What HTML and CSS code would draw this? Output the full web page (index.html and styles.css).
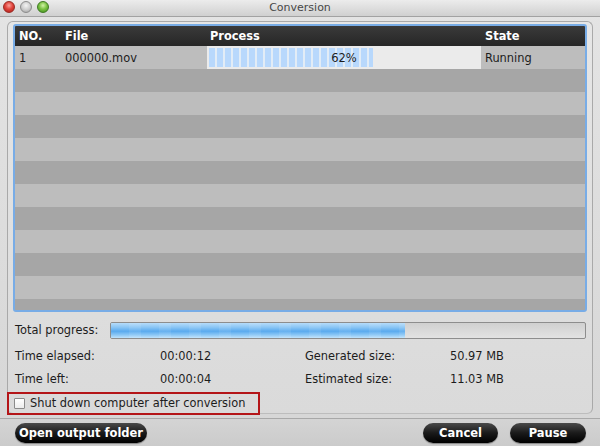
FILE: index.html
```html
<!DOCTYPE html>
<html>
<head>
<meta charset="utf-8">
<link rel="stylesheet" href="styles.css">
</head>
<body>
<div class="window">
  <div class="titlebar">
    <div class="lights">
      <span class="dot dot-red"></span>
      <span class="dot dot-gray"></span>
      <span class="dot dot-green"></span>
    </div>
    <div class="title">Conversion</div>
  </div>
  <div class="content">
    <div class="panel">
      <div class="table">
        <div class="row head">
          <div class="c c-no">NO.</div>
          <div class="c c-file">File</div>
          <div class="c c-proc">Process</div>
          <div class="c c-state">State</div>
        </div>
        <div class="row stripe-a">
          <div class="c c-no">1</div>
          <div class="c c-file">000000.mov</div>
          <div class="c c-proc cellbar"><div class="segs" style="width:60%"></div><span class="pct">62%</span></div>
          <div class="c c-state">Running</div>
        </div>
        <div class="row stripe-b"></div>
        <div class="row stripe-a"></div>
        <div class="row stripe-b"></div>
        <div class="row stripe-a"></div>
        <div class="row stripe-b"></div>
        <div class="row stripe-a"></div>
        <div class="row stripe-b"></div>
        <div class="row stripe-a"></div>
        <div class="row stripe-b"></div>
        <div class="row stripe-a"></div>
        <div class="row stripe-b"></div>
      </div>
      <div class="total">
        <span class="total-label">Total progress:</span>
        <div class="bar"><div class="fill" style="width:62%"></div></div>
      </div>
      <div class="info">
        <span>Time elapsed:</span><span>00:00:12</span><span>Generated size:</span><span>50.97 MB</span>
        <span>Time left:</span><span>00:00:04</span><span>Estimated size:</span><span>11.03 MB</span>
      </div>
      <div class="check-row">
        <span class="checkbox"></span>
        <span>Shut down computer after conversion</span>
      </div>
    </div>
    <div class="highlight"></div>
  </div>
  <div class="bottombar">
    <button class="btn btn-open">Open output folder</button>
    <div class="spacer"></div>
    <button class="btn btn-cancel">Cancel</button>
    <button class="btn btn-pause">Pause</button>
  </div>
</div>
</body>
</html>
```

FILE: styles.css
```css
html, body {
  margin: 0;
  padding: 0;
}
body {
  width: 600px;
  height: 446px;
  overflow: hidden;
  font-family: "DejaVu Sans", "Liberation Sans", sans-serif;
  font-size: 11.4px;
  color: #1c1c1c;
  background: #dedede;
}
.window {
  width: 600px;
  height: 446px;
  display: flex;
  flex-direction: column;
  background: linear-gradient(to bottom, #e4e4e4, #d6d6d6);
}
.titlebar {
  height: 16px;
  border-bottom: 1px solid #a2a2a2;
  background: linear-gradient(to bottom, #ececec, #d0d0d0);
  position: relative;
  display: flex;
  align-items: center;
  justify-content: center;
  flex: none;
}
.lights {
  position: absolute;
  left: 3px;
  top: 1px;
  display: flex;
  gap: 5px;
}
.dot {
  width: 12px;
  height: 12px;
  border-radius: 50%;
  box-sizing: border-box;
}
.dot-red {
  background: radial-gradient(circle at 50% 35%, #f8a09a 0%, #e0443c 45%, #a81a14 100%);
  border: 1px solid #9a2a24;
}
.dot-gray {
  background: radial-gradient(circle at 50% 35%, #f4f4f4 0%, #cfcfcf 50%, #9c9c9c 100%);
  border: 1px solid #8c8c8c;
}
.dot-green {
  background: radial-gradient(circle at 50% 35%, #d2f2a8 0%, #7cc444 45%, #3c8a1a 100%);
  border: 1px solid #3e7a22;
}
.title {
  font-size: 11px;
  color: #474747;
  line-height: 16px;
}
.content {
  position: relative;
  flex: 1;
  padding: 4px 7px 0 7px;
  display: flex;
  flex-direction: column;
}
.panel {
  flex: 1;
  border: 1px solid #a9a9a9;
  border-bottom-color: #bdbdbd;
  border-radius: 6px;
  padding: 2px 5px 0 5px;
  margin-bottom: 4px;
  background: linear-gradient(to bottom, #e6e6e6, #dadada);
  display: flex;
  flex-direction: column;
}
.table {
  height: 284px;
  border: 2px solid #78ace6;
  border-radius: 3px;
  overflow: hidden;
  background: #a6a6a6;
  flex: none;
}
.row {
  display: flex;
  height: 23px;
}
.row.head {
  height: 20px;
  background: linear-gradient(to bottom, #3a3a3a, #262626);
  color: #ffffff;
  font-weight: bold;
}
.stripe-a {
  background: #bdbdbd;
}
.stripe-b {
  background: #a6a6a6;
}
.c {
  display: flex;
  align-items: center;
  box-sizing: border-box;
  white-space: nowrap;
  flex: none;
}
.c-no { width: 46px; padding-left: 4px; }
.c-file { width: 146px; padding-left: 4px; }
.c-proc { width: 274px; padding-left: 3px; }
.c-state { flex: 1; padding-left: 4px; }
.cellbar {
  position: relative;
  background: #ebebeb;
  padding: 0;
  justify-content: center;
}
.segs {
  position: absolute;
  left: 2px;
  top: 2px;
  bottom: 2px;
  background: repeating-linear-gradient(to right, #b8d8fc 0 6px, #e2ecf6 6px 8px);
}
.pct {
  position: relative;
  font-size: 11.5px;
}
.total {
  display: flex;
  align-items: center;
  margin-top: 9px;
  height: 18px;
  padding-left: 2px;
}
.total-label {
  width: 95px;
  flex: none;
}
.bar {
  flex: 1;
  height: 17px;
  box-sizing: border-box;
  border: 1px solid #8d8d8d;
  border-radius: 2px;
  background: linear-gradient(to bottom, #d0d0d0, #e2e2e2);
  overflow: hidden;
  margin-right: 1px;
}
.fill {
  height: 100%;
  background:
    repeating-linear-gradient(to right, rgba(255,255,255,0) 0 18px, rgba(255,255,255,0.08) 18px 30px),
    linear-gradient(to bottom, #b6dcfa 0%, #88c4f4 30%, #5aaaee 55%, #8cc8f6 80%, #c0e2fb 100%);
}
.info {
  display: grid;
  grid-template-columns: 145px 145px 145px 145px;
  grid-auto-rows: 23px;
  align-items: center;
  margin-top: 5px;
  padding-left: 2px;
}
.check-row {
  display: flex;
  align-items: center;
  gap: 5px;
  margin-top: 3px;
  height: 20px;
  padding-left: 1px;
}
.checkbox {
  width: 11px;
  height: 11px;
  box-sizing: border-box;
  border: 1px solid #8a8a8a;
  background: linear-gradient(to bottom, #ffffff, #ececec);
  border-radius: 1px;
}
.highlight {
  position: absolute;
  left: 7px;
  top: 375px;
  width: 253px;
  height: 23px;
  box-sizing: border-box;
  border: 2px solid #b41518;
  pointer-events: none;
}
.bottombar {
  flex: none;
  height: 28px;
  border-top: 1px solid #a8a8a8;
  background: linear-gradient(to bottom, #d4d4d4, #cbcbcb);
  display: flex;
  align-items: center;
  padding: 0 14px 0 15px;
  box-sizing: border-box;
}
.spacer { flex: 1; }
.btn {
  height: 20px;
  border-radius: 10px;
  border: none;
  background: linear-gradient(to bottom, #4a4a4a 0%, #1a1a1a 50%, #000000 100%);
  color: #ffffff;
  font-family: "DejaVu Sans", "Liberation Sans", sans-serif;
  font-weight: bold;
  font-size: 11.5px;
  padding: 0;
  box-shadow: 0 1px 1px rgba(0,0,0,0.35);
}
.btn-open { width: 132px; }
.btn-cancel { width: 75px; margin-right: 12px; }
.btn-pause { width: 76px; }
```
